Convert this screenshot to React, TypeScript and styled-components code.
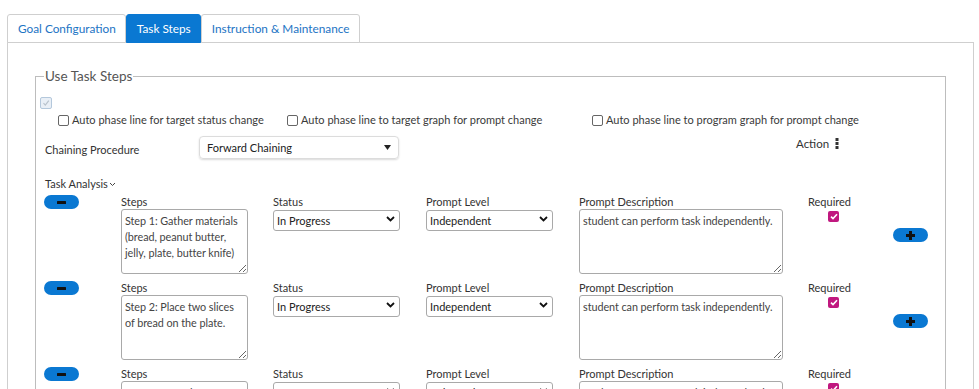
import React from 'react';
import styled, { createGlobalStyle } from 'styled-components';

// ── Global ────────────────────────────────────────────────────────────────

const GlobalStyle = createGlobalStyle`
  body {
    margin: 0;
    background: #fff;
    color: #333;
    font-family: "Segoe UI", Lato, "Liberation Sans", sans-serif;
  }
  * { box-sizing: border-box; }
`;

const BLUE = '#0a78d2';
const FONT = '"Segoe UI", Lato, "Liberation Sans", sans-serif';

// ── Tabs ──────────────────────────────────────────────────────────────────

const Page = styled.div`
  padding: 14px 5px 0 7px;
`;

const TabBar = styled.div`
  display: flex;
  border-bottom: 1px solid #cfcfcf;
`;

const Tab = styled.div<{ $active?: boolean }>`
  height: 29px;
  margin-bottom: -1px;
  padding: 0 9px 0 10px;
  display: flex;
  align-items: center;
  font-size: 11.8px;
  color: ${({ $active }) => ($active ? '#fff' : '#1c74c4')};
  background: ${({ $active }) => ($active ? BLUE : '#fff')};
  border: 1px solid ${({ $active }) => ($active ? BLUE : '#cfcfcf')};
  border-radius: 3px 3px 0 0;
`;

const Panel = styled.div`
  border: 1px solid #cfcfcf;
  border-top: none;
  min-height: 400px;
  padding: 25px 27px 0 27px;
`;

// ── Fieldset ──────────────────────────────────────────────────────────────

const Fieldset = styled.fieldset`
  margin: 0;
  padding: 0 0 20px 4px;
  border: 1px solid #bdbdbd;
  min-height: 400px;
`;

const Legend = styled.legend`
  margin-left: 4px;
  padding: 0 1px;
  font-size: 13.5px;
  line-height: 17px;
  color: #555;
`;

const DisabledBox = styled.span`
  display: block;
  width: 12px;
  height: 12px;
  margin-top: 12px;
  border: 1px solid #b4c8dc;
  border-radius: 2px;
  background: #e9eff6;
  svg { display: block; }
`;

const OptionRow = styled.div`
  display: flex;
  margin: 3px 0 0 18px;
  height: 14px;
  align-items: center;
`;

const Option = styled.label<{ $w?: number }>`
  display: flex;
  align-items: center;
  gap: 3px;
  width: ${({ $w }) => ($w ? `${$w}px` : 'auto')};
  font-size: 11px;
  color: #3a3a3a;
  white-space: nowrap;
`;

const Box = styled.span`
  display: inline-block;
  width: 11px;
  height: 11px;
  margin-top: 3px;
  border: 1px solid #666;
  border-radius: 2px;
  background: #fff;
`;

// ── Chaining + Action ─────────────────────────────────────────────────────

const ChainRow = styled.div`
  display: grid;
  grid-template-columns: 154px 200px 1fr;
  align-items: center;
  margin: 10px 0 0 5px;
  height: 23px;
`;

const PlainLabel = styled.span`
  font-size: 11px;
  color: #333;
  padding-top: 3px;
`;

const FancySelect = styled.div`
  height: 23px;
  border: 1px solid #dcdcdc;
  border-radius: 4px;
  box-shadow: 0 1px 2px rgba(0, 0, 0, 0.15);
  padding: 0 7px;
  display: flex;
  align-items: center;
  justify-content: space-between;
  font-size: 11px;
  color: #222;
`;

const Action = styled.div`
  justify-self: start;
  margin-left: 397px;
  margin-top: -9px;
  display: flex;
  align-items: center;
  gap: 6px;
  font-size: 11.5px;
  color: #333;
`;

const TaskAnalysis = styled.div`
  margin: 18px 0 0 5px;
  height: 14px;
  line-height: 14px;
  font-size: 11px;
  color: #333;
  display: flex;
  align-items: center;
  gap: 1px;
`;

// ── Step rows ─────────────────────────────────────────────────────────────

const Rows = styled.div`
  margin-top: 4px;
  padding-left: 4px;
  display: flex;
  flex-direction: column;
  gap: 7px;
`;

const StepRow = styled.div`
  display: grid;
  grid-template-columns: 77px 152px 153px 153px 229px 85px 1fr;
  align-items: start;
`;

const Pill = styled.button<{ $top?: number }>`
  width: 35px;
  height: 14px;
  margin-top: ${({ $top }) => $top ?? 0}px;
  padding: 0;
  border: none;
  border-radius: 7px;
  background: ${BLUE};
  display: flex;
  align-items: center;
  justify-content: center;
  cursor: pointer;
  svg { display: block; }
`;

const Field = styled.div`
  display: flex;
  flex-direction: column;
`;

const FieldLabel = styled.span`
  height: 14px;
  line-height: 14px;
  font-size: 11px;
  color: #333;
  white-space: nowrap;
`;

const Area = styled.textarea<{ $w: number }>`
  width: ${({ $w }) => $w}px;
  height: 65px;
  margin: 0;
  padding: 3px 3px;
  border: 1px solid #a9a9a9;
  border-radius: 3px;
  font-family: ${FONT};
  font-size: 10.8px;
  letter-spacing: -0.05px;
  line-height: 16px;
  color: #444;
  resize: vertical;
  outline: none;
`;

const SelectWrap = styled.div`
  position: relative;
  width: 127px;
  height: 21px;
`;

const Select = styled.select`
  appearance: none;
  width: 100%;
  height: 100%;
  margin: 0;
  padding: 0 0 0 3px;
  border: 1px solid #a9a9a9;
  border-radius: 3px;
  background: #fff;
  font-family: ${FONT};
  font-size: 11px;
  color: #222;
  outline: none;
`;

const Chevron = styled.svg`
  position: absolute;
  right: 5px;
  top: 7px;
  pointer-events: none;
`;

const RequiredCell = styled.div`
  display: flex;
  flex-direction: column;
`;

const Tick = styled.span`
  width: 11px;
  height: 11px;
  margin: 2px 0 0 20px;
  border-radius: 2px;
  background: #c0187f;
  display: flex;
  align-items: center;
  justify-content: center;
`;

// ── Data ──────────────────────────────────────────────────────────────────

const STEPS = [
  {
    text: 'Step 1: Gather materials (bread, peanut butter, jelly, plate, butter knife)',
    desc: 'student can perform task independently.',
  },
  {
    text: 'Step 2: Place two slices of bread on the plate.',
    desc: 'student can perform task independently.',
  },
  {
    text: 'Step 3: Spread peanut butter on one slice of bread.',
    desc: 'student can perform task independently.',
  },
];

const ChevronIcon = () => (
  <Chevron width="9" height="6" viewBox="0 0 9 6">
    <path d="M1 1l3.5 3.5L8 1" stroke="#111" strokeWidth="1.8" fill="none" />
  </Chevron>
);

const Minus = () => (
  <svg width="9" height="3" viewBox="0 0 9 3">
    <rect width="9" height="3" rx="0.5" fill="#111" />
  </svg>
);

const Plus = () => (
  <svg width="9" height="9" viewBox="0 0 9 9">
    <rect y="3" width="9" height="3" fill="#111" />
    <rect x="3" width="3" height="9" fill="#111" />
  </svg>
);

const App: React.FC = () => {
  return (
    <Page>
      <GlobalStyle />
      <TabBar>
        <Tab>Goal Configuration</Tab>
        <Tab $active>Task Steps</Tab>
        <Tab>Instruction &amp; Maintenance</Tab>
      </TabBar>

      <Panel>
        <Fieldset>
          <Legend>Use Task Steps</Legend>

          <DisabledBox>
            <svg width="10" height="10" viewBox="0 0 10 10">
              <path d="M2.5 5.2l1.8 1.9L7.8 2.6" stroke="#b8c2cc" strokeWidth="1.2" fill="none" />
            </svg>
          </DisabledBox>

          <OptionRow>
            <Option $w={229}>
              <Box />
              Auto phase line for target status change
            </Option>
            <Option $w={305}>
              <Box />
              Auto phase line to target graph for prompt change
            </Option>
            <Option>
              <Box />
              Auto phase line to program graph for prompt change
            </Option>
          </OptionRow>

          <ChainRow>
            <PlainLabel>Chaining Procedure</PlainLabel>
            <FancySelect>
              Forward Chaining
              <svg width="7" height="5" viewBox="0 0 7 5">
                <path d="M0 0h7L3.5 5z" fill="#222" />
              </svg>
            </FancySelect>
            <Action>
              Action
              <svg width="4" height="11" viewBox="0 0 4 11">
                <rect x="0.5" y="0" width="3" height="3" fill="#333" />
                <rect x="0.5" y="4" width="3" height="3" fill="#333" />
                <rect x="0.5" y="8" width="3" height="3" fill="#333" />
              </svg>
            </Action>
          </ChainRow>

          <TaskAnalysis>
            Task Analysis
            <svg width="7" height="5" viewBox="0 0 7 5">
              <path d="M1 1l2.5 2.5L6 1" stroke="#444" strokeWidth="1" fill="none" />
            </svg>
          </TaskAnalysis>

          <Rows>
            {STEPS.map((s, i) => (
              <StepRow key={i}>
                <Pill aria-label="remove step">
                  <Minus />
                </Pill>
                <Field>
                  <FieldLabel>Steps</FieldLabel>
                  <Area $w={127} defaultValue={s.text} />
                </Field>
                <Field>
                  <FieldLabel>Status</FieldLabel>
                  <SelectWrap>
                    <Select defaultValue="In Progress">
                      <option>In Progress</option>
                      <option>Mastered</option>
                      <option>Not Started</option>
                    </Select>
                    <ChevronIcon />
                  </SelectWrap>
                </Field>
                <Field>
                  <FieldLabel>Prompt Level</FieldLabel>
                  <SelectWrap>
                    <Select defaultValue="Independent">
                      <option>Independent</option>
                      <option>Verbal</option>
                      <option>Gestural</option>
                    </Select>
                    <ChevronIcon />
                  </SelectWrap>
                </Field>
                <Field>
                  <FieldLabel>Prompt Description</FieldLabel>
                  <Area $w={204} defaultValue={s.desc} />
                </Field>
                <RequiredCell>
                  <FieldLabel>Required</FieldLabel>
                  <Tick>
                    <svg width="8" height="7" viewBox="0 0 8 7">
                      <path d="M1 3.6l2 2L7 1.2" stroke="#fff" strokeWidth="1.6" fill="none" />
                    </svg>
                  </Tick>
                </RequiredCell>
                {i < 2 ? (
                  <Pill $top={33} aria-label="add step">
                    <Plus />
                  </Pill>
                ) : (
                  <span />
                )}
              </StepRow>
            ))}
          </Rows>
        </Fieldset>
      </Panel>
    </Page>
  );
};

export default App;
